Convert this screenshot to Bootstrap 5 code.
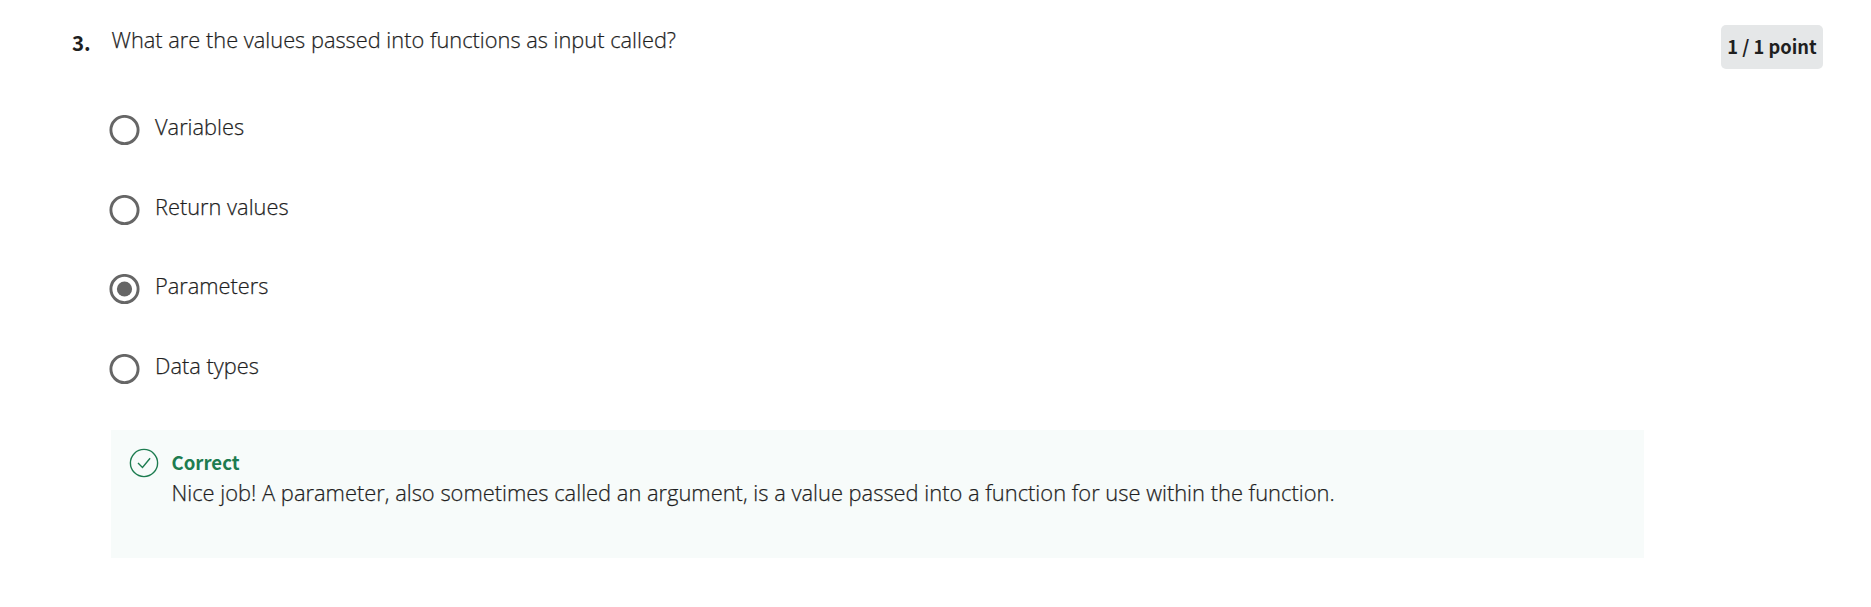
<!DOCTYPE html>
<html lang="en">
<head>
<meta charset="utf-8">
<title>Quiz question</title>
<link href="https://cdn.jsdelivr.net/npm/bootstrap@5.3.0/dist/css/bootstrap.min.css" rel="stylesheet">
<style>
body{font-family:"Open Sans",sans-serif;font-weight:300;font-size:21.8px;line-height:30px;color:#1f1f1f;background:#fff;-webkit-text-stroke:.25px currentColor}
.semi{font-family:"Noto Sans CJK SC",sans-serif;font-weight:700;-webkit-text-stroke:0}
.question{padding:25px 48px 0 72px}
.num{width:39.5px;font-size:20.5px;padding-top:2px}
.points{width:102px;height:44px;padding-bottom:2px;background:#e5e7e8;border-radius:5px;font-size:18.3px}
.options{margin:46px 0 0 109px}
.option{height:79.7px;gap:15px}
.option svg{width:31px;height:31px}
.option span{margin-top:-3px}
.feedback{margin:-4px 227px 0 111px;height:128px;background:#f7fbfa;padding:17px 18px;gap:12.5px}
.feedback svg{width:30px;height:30px;margin-top:1px}
.correct{color:#1d7c50;font-size:18.6px;margin-bottom:1px}
.explanation{font-size:21.88px}
</style>
</head>
<body>
<main>
  <div class="question d-flex align-items-start">
    <div class="num semi">3.</div>
    <div class="flex-grow-1">What are the values passed into functions as input called?</div>
    <div class="points semi d-flex align-items-center justify-content-center text-nowrap">1 / 1 point</div>
  </div>
  <div class="options">
    <div class="option d-flex align-items-start"><svg viewBox="0 0 31 31"><circle cx="15.5" cy="15" r="13.6" fill="none" stroke="#666" stroke-width="2.9"/></svg><span>Variables</span></div>
    <div class="option d-flex align-items-start"><svg viewBox="0 0 31 31"><circle cx="15.5" cy="15" r="13.6" fill="none" stroke="#666" stroke-width="2.9"/></svg><span>Return values</span></div>
    <div class="option d-flex align-items-start"><svg viewBox="0 0 31 31"><circle cx="15.5" cy="15" r="13.6" fill="none" stroke="#666" stroke-width="2.9"/><circle cx="15.5" cy="15" r="7.6" fill="#666"/></svg><span>Parameters</span></div>
    <div class="option d-flex align-items-start"><svg viewBox="0 0 31 31"><circle cx="15.5" cy="15" r="13.6" fill="none" stroke="#666" stroke-width="2.9"/></svg><span>Data types</span></div>
  </div>
  <div class="feedback d-flex align-items-start">
    <svg viewBox="0 0 30 30" fill="none" stroke="#1d7c50" stroke-width="1.4"><circle cx="15" cy="15" r="13.6"/><path d="M9 15l4.5 4.5 7.6-9.2"/></svg>
    <div>
      <div class="correct semi">Correct</div>
      <div class="explanation">Nice job! A parameter, also sometimes called an argument, is a value passed into a function for use within the function.</div>
    </div>
  </div>
</main>
<script src="https://cdn.jsdelivr.net/npm/bootstrap@5.3.0/dist/js/bootstrap.bundle.min.js"></script>
</body>
</html>
